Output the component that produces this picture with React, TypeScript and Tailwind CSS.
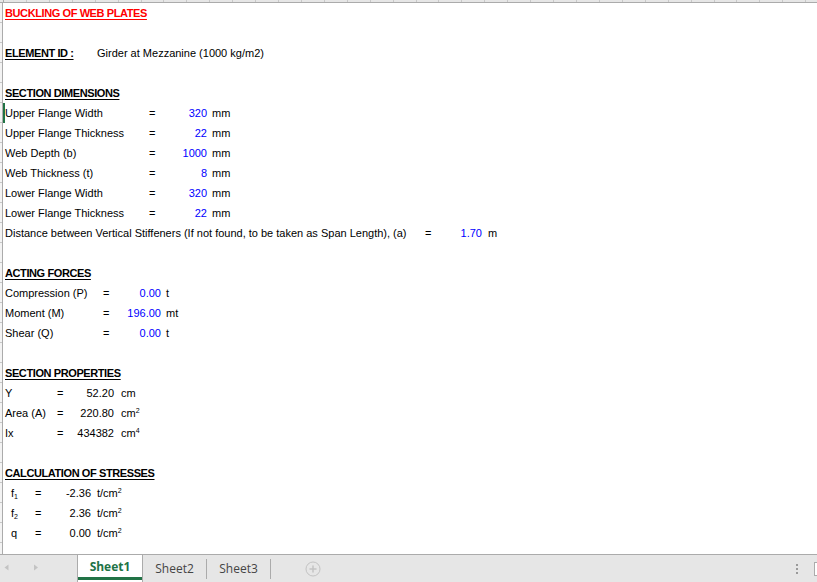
import React from "react";

const colWidths: number[] = (() => {
  const arr: number[] = [];
  for (let k = 0; k < 36; k++) {
    arr.push(Math.round(3 + 22.92 * (k + 1)) - Math.round(3 + 22.92 * k));
  }
  return arr;
})();

function Row({ children }: { children?: React.ReactNode }) {
  return <div className="h-[20px] leading-[20px] flex whitespace-nowrap shrink-0">{children}</div>;
}

function Heading({ children, red }: { children: React.ReactNode; red?: boolean }) {
  return (
    <Row>
      <span className={red ? "pl-[2px] font-bold tracking-[-0.4px] underline underline-offset-[2px] text-[#ff0000]" : "pl-[2px] font-bold tracking-[-0.4px] underline underline-offset-[2px] text-black"}>
        {children}
      </span>
    </Row>
  );
}

function Sup({ children }: { children: React.ReactNode }) {
  return <span className="text-[7px] relative -top-[4px] align-baseline">{children}</span>;
}
function Sub({ children }: { children: React.ReactNode }) {
  return <span className="text-[7px] relative top-[2px] align-baseline">{children}</span>;
}

export default function App() {
  const dims = [
    ["Upper Flange Width", "320"],
    ["Upper Flange Thickness", "22"],
    ["Web Depth (b)", "1000"],
    ["Web Thickness (t)", "8"],
    ["Lower Flange Width", "320"],
    ["Lower Flange Thickness", "22"],
  ];
  const forces = [
    ["Compression (P)", "0.00", "t"],
    ["Moment (M)", "196.00", "mt"],
    ["Shear (Q)", "0.00", "t"],
  ];
  return (
    <div className="w-[817px] h-[582px] bg-white overflow-hidden relative font-['Liberation_Sans',Arial,sans-serif] text-[11px] text-black">
      <div className="flex flex-col h-full">
        {/* column header strip */}
        <div className="h-[3px] flex shrink-0 bg-[#e6e6e6] border-b border-[#ababab]">
          <div className="w-[4px] h-full border-r border-[#ababab] shrink-0" />
          {colWidths.map((w, i) => (
            <div key={i} className={w === 23 ? "w-[23px] h-full border-r border-[#c8c8c8] shrink-0" : w === 24 ? "w-[24px] h-full border-r border-[#c8c8c8] shrink-0" : "w-[22px] h-full border-r border-[#c8c8c8] shrink-0"} />
          ))}
        </div>
        <div className="flex-1 flex min-h-0 overflow-hidden">
          {/* row header strip */}
          <div className="w-[3px] shrink-0 flex flex-col bg-[#f3f3f3] border-r border-[#ababab]">
            {Array.from({ length: 28 }).map((_, i) => (
              <div key={i} className="h-[20px] shrink-0 border-b border-[#c8c8c8]" />
            ))}
          </div>
          {/* sheet */}
          <div className="flex-1 flex flex-col relative">
            <div className="absolute left-0 top-[100px] w-[2px] h-[20px] bg-[#217346]" />
            <Heading red>BUCKLING OF WEB PLATES</Heading>
            <Row />
            <Row>
              <span className="w-[94px] shrink-0 pl-[2px]">
                <span className="font-bold tracking-[-0.4px] underline underline-offset-[2px]">ELEMENT ID :</span>
              </span>
              <span>Girder at Mezzanine (1000 kg/m2)</span>
            </Row>
            <Row />
            <Heading>SECTION DIMENSIONS</Heading>
            {dims.map(([l, v]) => (
              <Row key={l}>
                <span className="w-[146px] shrink-0 pl-[2px]">{l}</span>
                <span className="w-[6px] shrink-0">=</span>
                <span className="w-[52px] shrink-0 text-right text-[#0000ff]">{v}</span>
                <span className="pl-[5px]">mm</span>
              </Row>
            ))}
            <Row>
              <span className="w-[422px] shrink-0 pl-[2px]">
                Distance between Vertical Stiffeners (If not found, to be taken as Span Length), (a)
              </span>
              <span className="w-[6px] shrink-0">=</span>
              <span className="w-[51px] shrink-0 text-right text-[#0000ff]">1.70</span>
              <span className="pl-[6px]">m</span>
            </Row>
            <Row />
            <Heading>ACTING FORCES</Heading>
            {forces.map(([l, v, u]) => (
              <Row key={l}>
                <span className="w-[100px] shrink-0 pl-[2px]">{l}</span>
                <span className="w-[6px] shrink-0">=</span>
                <span className="w-[52px] shrink-0 text-right text-[#0000ff]">{v}</span>
                <span className="pl-[5px]">{u}</span>
              </Row>
            ))}
            <Row />
            <Heading>SECTION PROPERTIES</Heading>
            <Row>
              <span className="w-[54px] shrink-0 pl-[2px]">Y</span>
              <span className="w-[6px] shrink-0">=</span>
              <span className="w-[51px] shrink-0 text-right">52.20</span>
              <span className="pl-[7px]">cm</span>
            </Row>
            <Row>
              <span className="w-[54px] shrink-0 pl-[2px]">Area (A)</span>
              <span className="w-[6px] shrink-0">=</span>
              <span className="w-[51px] shrink-0 text-right">220.80</span>
              <span className="pl-[7px]">
                cm<Sup>2</Sup>
              </span>
            </Row>
            <Row>
              <span className="w-[54px] shrink-0 pl-[2px]">Ix</span>
              <span className="w-[6px] shrink-0">=</span>
              <span className="w-[51px] shrink-0 text-right">434382</span>
              <span className="pl-[7px]">
                cm<Sup>4</Sup>
              </span>
            </Row>
            <Row />
            <Heading>CALCULATION OF STRESSES</Heading>
            <Row>
              <span className="w-[32px] shrink-0 pl-[8px]">
                f<Sub>1</Sub>
              </span>
              <span className="w-[6px] shrink-0">=</span>
              <span className="w-[50px] shrink-0 text-right">-2.36</span>
              <span className="pl-[6px]">
                t/cm<Sup>2</Sup>
              </span>
            </Row>
            <Row>
              <span className="w-[32px] shrink-0 pl-[8px]">
                f<Sub>2</Sub>
              </span>
              <span className="w-[6px] shrink-0">=</span>
              <span className="w-[50px] shrink-0 text-right">2.36</span>
              <span className="pl-[6px]">
                t/cm<Sup>2</Sup>
              </span>
            </Row>
            <Row>
              <span className="w-[32px] shrink-0 pl-[8px]">q</span>
              <span className="w-[6px] shrink-0">=</span>
              <span className="w-[50px] shrink-0 text-right">0.00</span>
              <span className="pl-[6px]">
                t/cm<Sup>2</Sup>
              </span>
            </Row>
            <Row />
          </div>
        </div>
        {/* sheet tab bar */}
        <div className="h-[28px] shrink-0 bg-[#e6e6e6] border-t border-[#ababab] flex items-stretch font-['Open_Sans','Noto_Sans',sans-serif] text-[12px] text-[#444]">
          <div className="w-[77px] shrink-0 flex items-center">
            <svg width="77" height="27" viewBox="0 0 77 27">
              <path d="M8.5 9.5 L4.5 12.5 L8.5 15.5 Z" fill="#c3c3c3" />
              <path d="M34 9.5 L38 12.5 L34 15.5 Z" fill="#c3c3c3" />
            </svg>
          </div>
          <div className="w-[66px] shrink-0 bg-white border-l border-r border-[#ababab] flex flex-col">
            <div className="flex-1 flex items-center justify-center pt-[1px] font-bold text-[#217346]">Sheet1</div>
            <div className="h-[3px] bg-[#217346] mb-[2px]" />
          </div>
          <div className="w-[64px] shrink-0 flex items-center justify-end py-[3px]">
            <div className="flex-1 text-center">Sheet2</div>
            <div className="w-px h-[20px] bg-[#ababab]" />
          </div>
          <div className="w-[64px] shrink-0 flex items-center justify-end py-[3px]">
            <div className="flex-1 text-center">Sheet3</div>
            <div className="w-px h-[20px] bg-[#ababab]" />
          </div>
          <div className="w-[84px] shrink-0 flex items-center justify-center">
            <svg width="16" height="16" viewBox="0 0 16 16">
              <circle cx="8" cy="8" r="7" fill="none" stroke="#c3c3c3" strokeWidth="1" />
              <path d="M8 4.5 V11.5 M4.5 8 H11.5" stroke="#c3c3c3" strokeWidth="1.5" />
            </svg>
          </div>
          <div className="flex-1" />
          <div className="w-[14px] shrink-0 flex flex-col items-center justify-center gap-[2px] pt-[1px]">
            <div className="w-[2px] h-[2px] bg-[#9a9a9a]" />
            <div className="w-[2px] h-[2px] bg-[#9a9a9a]" />
            <div className="w-[2px] h-[2px] bg-[#9a9a9a]" />
          </div>
          <div className="w-[10px] shrink-0" />
          <div className="w-[3px] shrink-0 flex items-center">
            <div className="w-[3px] h-[14px] border-l border-t border-b border-[#ababab] bg-white" />
          </div>
        </div>
      </div>
    </div>
  );
}
